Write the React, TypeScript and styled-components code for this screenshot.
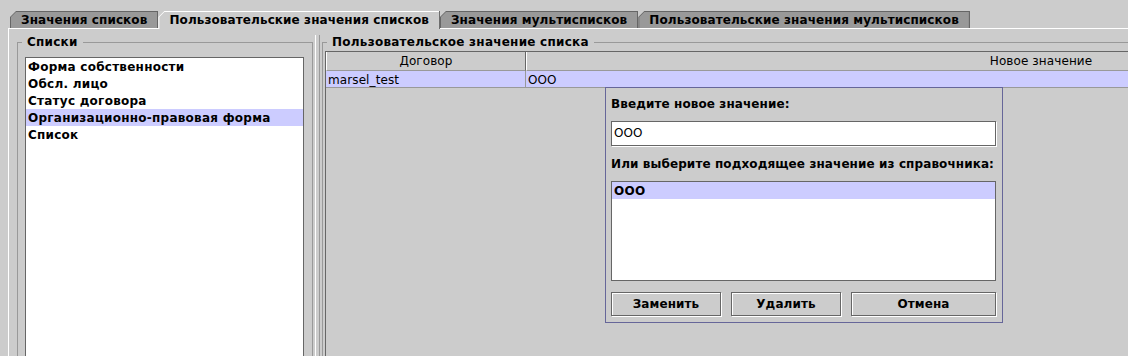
import * as React from 'react';

import styled, { createGlobalStyle } from 'styled-components';

const GlobalStyle = createGlobalStyle`
  html, body {
    margin: 0;
    padding: 0;
    background: #cccccc;
    overflow: hidden;
  }
  body {
    font-family: "DejaVu Sans", "Noto Sans", sans-serif;
    font-size: 12px;
    letter-spacing: 0.1px;
    color: #000;
  }
`;

const Window = styled.div`
  width: 1570px;
  height: 356px;
  box-sizing: border-box;
  padding: 11px 0 0 8px;
  display: flex;
  flex-direction: column;
`;

const TabStrip = styled.div`
  display: flex;
  align-items: flex-start;
  height: 17px;
  margin-left: 2px;
  position: relative;
  z-index: 1;
`;

const Tab = styled.div<{ $active?: boolean }>`
  height: ${(p) => (p.$active ? 18 : 17)}px;
  box-sizing: border-box;
  padding: 1px 1px 0 1px;
  background: ${(p) => (p.$active ? '#ffffff' : '#666666')};
  box-shadow: inset -1px 0 0 #666666;
  clip-path: polygon(0 6px, 6px 0, 100% 0, 100% 100%, 0 100%);
`;

const TabFace = styled.div<{ $active?: boolean }>`
  height: 100%;
  display: flex;
  align-items: center;
  padding: 0 10px ${(p) => (p.$active ? 1 : 0)}px 10px;
  box-sizing: border-box;
  background: ${(p) => (p.$active ? '#cccccc' : '#999999')};
  clip-path: polygon(0 5px, 5px 0, 100% 0, 100% 100%, 0 100%);
  font-weight: bold;
  white-space: nowrap;
`;

const TabBody = styled.div`
  flex: 1;
  display: flex;
  min-height: 0;
  border-top: 1px solid #ffffff;
  border-left: 1px solid #ffffff;
  padding: 6px 0 0 8px;
`;

const Group = styled.fieldset`
  margin: 0;
  min-width: 0;
  border: 1px solid #999999;
  box-sizing: border-box;
  height: 420px;
`;

const ListsGroup = styled(Group)`
  width: 296px;
  flex: none;
  padding: 8px 8px 0 7px;
`;

const ValueGroup = styled(Group)`
  flex: 1;
  padding: 2px 0 0 2px;
`;

const Legend = styled.legend<{ $offset: number }>`
  padding: 0 5px;
  margin-left: ${(p) => p.$offset}px;
  font-weight: bold;
  line-height: 14px;
  letter-spacing: 0.25px;
`;

const SplitDivider = styled.div`
  flex: none;
  width: 5px;
  margin: 0 2px;
  box-sizing: border-box;
  border-left: 1px solid #ffffff;
  border-right: 1px solid #999999;
`;

const ListBox = styled.div<{ $height?: number }>`
  background: #ffffff;
  border: 1px solid #666666;
  height: ${(p) => p.$height ?? 400}px;
  box-sizing: border-box;
  overflow: hidden;
`;

const ListItem = styled.div<{ $selected?: boolean }>`
  height: 17px;
  box-sizing: border-box;
  padding: 2px 0 0 2px;
  line-height: 15px;
  font-weight: bold;
  letter-spacing: 0.25px;
  white-space: nowrap;
  background: ${(p) => (p.$selected ? '#ccccff' : 'transparent')};
`;

const TableWrap = styled.div`
  position: relative;
  height: 400px;
  border: 1px solid #666666;
  border-right: none;
  background: #cccccc;
`;

const TableRow = styled.div`
  display: grid;
  grid-template-columns: 200px 1030px;
`;

const HeaderCell = styled.div`
  height: 19px;
  line-height: 18px;
  box-sizing: border-box;
  text-align: center;
  border-left: 1px solid #ffffff;
  border-right: 1px solid #666666;
  border-bottom: 1px solid #999999;
  white-space: nowrap;
`;

const Cell = styled.div`
  height: 17px;
  box-sizing: border-box;
  padding: 1px 0 0 2px;
  line-height: 16px;
  background: #ccccff;
  border-right: 1px solid #999999;
  border-bottom: 1px solid #999999;
  white-space: nowrap;
`;

const Popup = styled.div`
  position: absolute;
  left: 279px;
  top: 35px;
  width: 398px;
  height: 236px;
  box-sizing: border-box;
  border: 1px solid #666699;
  background: #cccccc;
  padding: 9px 6px 6px 5px;
  display: flex;
  flex-direction: column;
`;

const Caption = styled.div<{ $gap?: number }>`
  font-weight: bold;
  line-height: 14px;
  margin-top: ${(p) => p.$gap ?? 0}px;
  white-space: nowrap;
`;

const TextField = styled.div`
  margin-top: 10px;
  height: 25px;
  box-sizing: border-box;
  background: #ffffff;
  border: 1px solid #666666;
  box-shadow: 1px 1px 0 #ffffff;
  padding-left: 2px;
  line-height: 23px;
`;

const PickList = styled(ListBox)`
  margin-top: 10px;
`;

const ButtonRow = styled.div`
  margin-top: 11px;
  display: grid;
  grid-template-columns: 110px 110px 1fr;
  gap: 10px;
`;

const Button = styled.button`
  height: 24px;
  margin: 0;
  padding: 0;
  font: inherit;
  font-weight: bold;
  letter-spacing: inherit;
  color: #000;
  background: #cccccc;
  border: 1px solid #666666;
  box-shadow: 1px 1px 0 #ffffff, inset 1px 1px 0 #ffffff;
`;

const tabs = [
  'Значения списков',
  'Пользовательские значения списков',
  'Значения мультисписков',
  'Пользовательские значения мультисписков',
];

const lists = [
  'Форма собственности',
  'Обсл. лицо',
  'Статус договора',
  'Организационно-правовая форма',
  'Список',
];

export default function App() {
  return (
    <>
      <GlobalStyle />
      <Window>
        <TabStrip>
          {tabs.map((t, i) => (
            <Tab key={t} $active={i === 1}>
              <TabFace $active={i === 1}>{t}</TabFace>
            </Tab>
          ))}
        </TabStrip>
        <TabBody>
          <ListsGroup>
            <Legend $offset={-3}>Списки</Legend>
            <ListBox>
              {lists.map((l, i) => (
                <ListItem key={l} $selected={i === 3}>{l}</ListItem>
              ))}
            </ListBox>
          </ListsGroup>
          <SplitDivider />
          <ValueGroup>
            <Legend $offset={2}>Пользовательское значение списка</Legend>
            <TableWrap>
              <TableRow>
                <HeaderCell>Договор</HeaderCell>
                <HeaderCell>Новое значение</HeaderCell>
              </TableRow>
              <TableRow>
                <Cell>marsel_test</Cell>
                <Cell>OOO</Cell>
              </TableRow>
              <Popup>
                <Caption>Введите новое значение:</Caption>
                <TextField>OOO</TextField>
                <Caption $gap={11}>Или выберите подходящее значение из справочника:</Caption>
                <PickList $height={100}>
                  <ListItem $selected>OOO</ListItem>
                </PickList>
                <ButtonRow>
                  <Button>Заменить</Button>
                  <Button>Удалить</Button>
                  <Button>Отмена</Button>
                </ButtonRow>
              </Popup>
            </TableWrap>
          </ValueGroup>
        </TabBody>
      </Window>
    </>
  );
}
